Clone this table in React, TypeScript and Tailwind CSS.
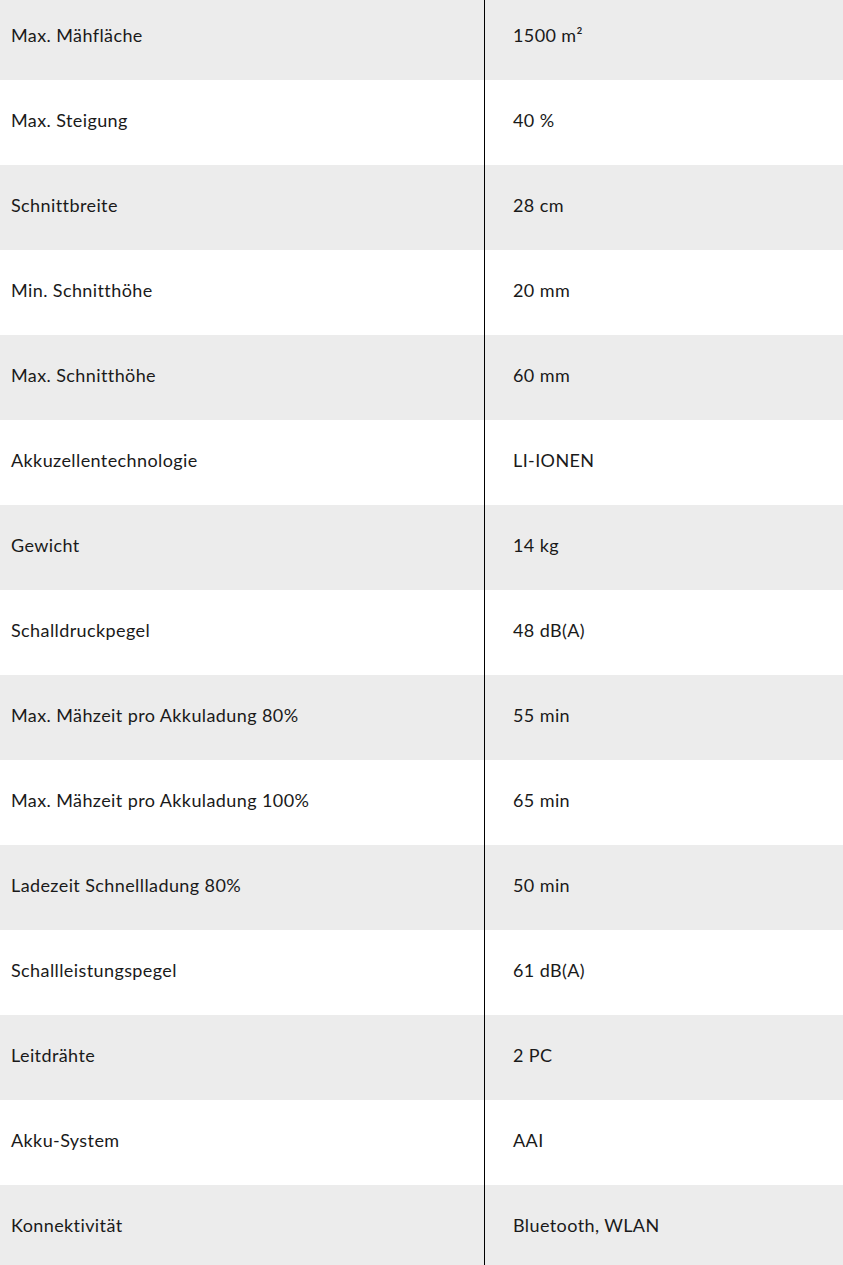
const SPECS: [string, string][] = [
  ['Max. Mähfläche', '1500 m²'],
  ['Max. Steigung', '40 %'],
  ['Schnittbreite', '28 cm'],
  ['Min. Schnitthöhe', '20 mm'],
  ['Max. Schnitthöhe', '60 mm'],
  ['Akkuzellentechnologie', 'LI-IONEN'],
  ['Gewicht', '14 kg'],
  ['Schalldruckpegel', '48 dB(A)'],
  ['Max. Mähzeit pro Akkuladung 80%', '55 min'],
  ['Max. Mähzeit pro Akkuladung 100%', '65 min'],
  ['Ladezeit Schnellladung 80%', '50 min'],
  ['Schallleistungspegel', '61 dB(A)'],
  ['Leitdrähte', '2 PC'],
  ['Akku-System', 'AAI'],
  ['Konnektivität', 'Bluetooth, WLAN'],
];

export default function App() {
  return (
    <div className="h-[1265px] overflow-hidden bg-white font-['Lato','Liberation_Sans',sans-serif] text-[18px] tracking-[0.4px] text-[#1a1a1a]">
      <div className="-mt-[5px]">
        {SPECS.map(([label, value], i) => (
          <div
            key={label}
            className={`grid h-[85px] grid-cols-[485px_1fr] items-stretch ${i % 2 === 0 ? 'bg-[#ececec]' : 'bg-white'}`}
          >
            <div className="flex items-center border-r border-black pb-[5px] pl-[11px]">{label}</div>
            <div className="flex items-center pb-[5px] pl-[28px]">{value}</div>
          </div>
        ))}
      </div>
    </div>
  );
}
